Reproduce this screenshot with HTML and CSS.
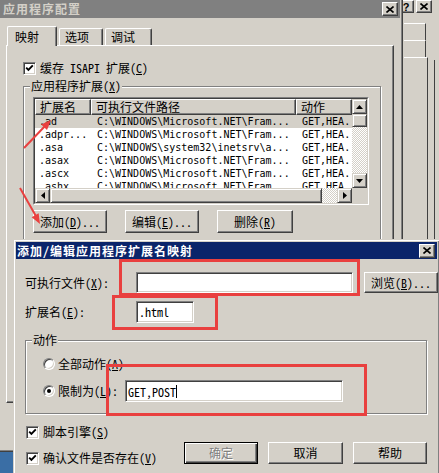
FILE: index.html
```html
<!DOCTYPE html>
<html lang="zh-CN">
<head>
  <meta charset="UTF-8" />
  <meta name="viewport" content="width=device-width, initial-scale=1.0" />
  <title>应用程序配置</title>
  <link rel="stylesheet" href="styles.css">
</head>
<body>
  <!-- window behind, on the right -->
  <div class="side">
    <div class="side-top">
      <span class="sbtn">?</span>
      <span class="sbtn"><svg width="8" height="7" viewBox="0 0 8 7"><path d="M0.5 0.5L7.5 6.5M7.5 0.5L0.5 6.5" stroke="#000" stroke-width="1.6"/></svg></span>
    </div>
    <div class="side-main">
      <div class="side-col">
        <div class="side-tab"></div>
        <div class="side-tab"></div>
        <div class="side-page"></div>
      </div>
      <div class="side-edge"></div>
    </div>
  </div>

  <!-- 应用程序配置 -->
  <div class="win win-main">
    <div class="title title-off">
      <span>应用程序配置</span>
      <span class="tbtn"><svg width="8" height="7" viewBox="0 0 8 7"><path d="M0.5 0.5L7.5 6.5M7.5 0.5L0.5 6.5" stroke="#000" stroke-width="1.6"/></svg></span>
    </div>
    <div class="tabs">
      <div class="tab tab-on">映射</div>
      <div class="tab tab-opt">选项</div>
      <div class="tab tab-dbg">调试</div>
    </div>
    <div class="panel">
      <div class="chk">
        <span class="box"><svg width="9" height="8" viewBox="0 0 9 8"><polyline points="1.2,3.6 3.4,5.8 7.8,1.4" fill="none" stroke="#000" stroke-width="1.9"/></svg></span>
        <span>缓存 ISAPI 扩展(<u>C</u>)</span>
      </div>
      <fieldset class="group group-ext">
        <legend>应用程序扩展(<u>X</u>)</legend>
        <div class="group-in">
          <div class="list">
            <div class="list-in">
              <div class="view">
                <div class="head"><span>扩展名</span><span>可执行文件路径</span><span>动作</span></div>
                <div class="row row-sel"><span>.ad</span><span>C:\WINDOWS\Microsoft.NET\Fram...</span><span>GET,HEA...</span></div>
                <div class="row"><span>.adpr...</span><span>C:\WINDOWS\Microsoft.NET\Fram...</span><span>GET,HEA...</span></div>
                <div class="row"><span>.asa</span><span>C:\WINDOWS\system32\inetsrv\a...</span><span>GET,HEA...</span></div>
                <div class="row"><span>.asax</span><span>C:\WINDOWS\Microsoft.NET\Fram...</span><span>GET,HEA...</span></div>
                <div class="row"><span>.ascx</span><span>C:\WINDOWS\Microsoft.NET\Fram...</span><span>GET,HEA...</span></div>
                <div class="row"><span>.ashx</span><span>C:\WINDOWS\Microsoft.NET\Fram...</span><span>GET,HEA...</span></div>
              </div>
              <div class="vscroll">
                <span class="sb-btn"><svg width="7" height="4" viewBox="0 0 7 4"><polygon points="3.5,0 7,4 0,4"/></svg></span>
                <span class="sb-thumb"></span>
                <span class="sb-track"></span>
                <span class="sb-btn"><svg width="7" height="4" viewBox="0 0 7 4"><polygon points="0,0 7,0 3.5,4"/></svg></span>
              </div>
              <div class="hscroll">
                <span class="sb-btn"><svg width="4" height="7" viewBox="0 0 4 7"><polygon points="4,0 4,7 0,3.5"/></svg></span>
                <span class="sb-thumb"></span>
                <span class="sb-track"></span>
                <span class="sb-btn"><svg width="4" height="7" viewBox="0 0 4 7"><polygon points="0,0 4,3.5 0,7"/></svg></span>
              </div>
              <div class="corner"></div>
            </div>
          </div>
          <div class="btnrow">
            <button class="btn">添加(<u>D</u>)...</button>
            <button class="btn">编辑(<u>E</u>)...</button>
            <button class="btn btn-del">删除(<u>R</u>)</button>
          </div>
        </div>
      </fieldset>
    </div>
  </div>

  <!-- 添加/编辑应用程序扩展名映射 -->
  <div class="win dlg">
    <div class="title title-on">
      <span>添加/编辑应用程序扩展名映射</span>
      <span class="tbtn"><svg width="8" height="7" viewBox="0 0 8 7"><path d="M0.5 0.5L7.5 6.5M7.5 0.5L0.5 6.5" stroke="#000" stroke-width="1.6"/></svg></span>
    </div>
    <div class="dlg-body">
      <div class="form">
        <span>可执行文件(<u>X</u>):</span>
        <div class="field"></div>
        <button class="btn">浏览(<u>B</u>)...</button>
        <span>扩展名(<u>E</u>):</span>
        <div class="field field-ext">.html</div>
      </div>
      <fieldset class="group group-verbs">
        <legend>动作</legend>
        <div class="group-in">
          <div class="opt opt-all"><span class="radio"></span><span>全部动作(<u>A</u>)</span></div>
          <div class="opt"><span class="radio radio-on"></span><span class="opt-lbl">限制为(<u>L</u>):</span><div class="field field-verbs"><span class="caret">GET,POST</span></div></div>
        </div>
      </fieldset>
      <div class="foot">
        <div class="checks">
          <div class="chk">
            <span class="box"><svg width="9" height="8" viewBox="0 0 9 8"><polyline points="1.2,3.6 3.4,5.8 7.8,1.4" fill="none" stroke="#000" stroke-width="1.9"/></svg></span>
            <span>脚本引擎(<u>S</u>)</span>
          </div>
          <div class="chk">
            <span class="box"><svg width="9" height="8" viewBox="0 0 9 8"><polyline points="1.2,3.6 3.4,5.8 7.8,1.4" fill="none" stroke="#000" stroke-width="1.9"/></svg></span>
            <span>确认文件是否存在(<u>V</u>)</span>
          </div>
        </div>
        <div class="actions">
          <button class="btn btn-def" disabled>确定</button>
          <button class="btn btn-cancel">取消</button>
          <button class="btn">帮助</button>
        </div>
      </div>
    </div>
  </div>

  <!-- annotations -->
  <div class="mark mark-exe"></div>
  <div class="mark mark-ext"></div>
  <div class="mark mark-verbs"></div>
  <svg class="arrows" width="439" height="473" viewBox="0 0 439 473">
    <line x1="24" y1="148" x2="46" y2="125" stroke="#e9403f" stroke-width="2"/>
    <polygon points="51,120 47,130 41.2,124.4" fill="#e9403f"/>
    <line x1="20" y1="188" x2="37" y2="218" stroke="#e9403f" stroke-width="2"/>
    <polygon points="40,224 38.65,213.3 31.65,217.2" fill="#e9403f"/>
  </svg>
</body>
</html>
```

FILE: styles.css
```css
* {
  box-sizing: border-box;
}
body {
  margin: 0;
  width: 439px;
  height: 473px;
  overflow: hidden;
  position: relative;
  background: #3a6ea5;
  font-family: "Noto Sans Mono CJK SC", "Noto Sans CJK SC", sans-serif;
  font-size: 12px;
  line-height: 14px;
  color: #000;
}
u {
  text-underline-offset: 1px;
}

/* windows */
.win {
  position: absolute;
  display: flex;
  flex-direction: column;
  padding: 2px;
  background: #d4d0c8;
  border: 1px solid;
  border-color: #d4d0c8 #404040 #404040 #d4d0c8;
  box-shadow: inset 1px 1px #fff, inset -1px -1px #808080;
}
.win-main {
  left: -3px;
  top: -3px;
  width: 406px;
  height: 455px;
}
.dlg {
  left: 13px;
  top: 239px;
  width: 427px;
  height: 240px;
}
.title {
  display: flex;
  align-items: center;
  justify-content: space-between;
  flex: none;
  height: 18px;
  padding: 0 2px 0 3px;
  font-weight: bold;
  letter-spacing: 1px;
}
.title-off {
  background: #808080;
  color: #d4d0c8;
}
.title-on {
  height: 17px;
  padding-left: 1px;
  background: #0a246a;
  color: #fff;
}
.tbtn {
  display: flex;
  align-items: center;
  justify-content: center;
  width: 16px;
  height: 14px;
  background: #d4d0c8;
  border: 1px solid;
  border-color: #fff #404040 #404040 #fff;
  box-shadow: inset -1px -1px #808080;
}

/* tabs */
.tabs {
  display: flex;
  align-items: flex-end;
  height: 27px;
  padding-left: 7px;
  flex: none;
}
.tab {
  height: 17px;
  padding: 1px 0 0 5px;
  border-top: 1px solid #fff;
  border-left: 1px solid #fff;
  border-right: 1px solid #404040;
  border-radius: 2px 2px 0 0;
  box-shadow: inset -1px 0 #808080;
}
.tab-on {
  position: relative;
  z-index: 1;
  width: 50px;
  height: 20px;
  margin-bottom: -1px;
  padding: 3px 0 0 7px;
  background: #d4d0c8;
}
.tab-opt {
  width: 44px;
  margin-left: 2px;
}
.tab-dbg {
  width: 47px;
  margin-left: 2px;
}
.panel {
  width: 388px;
  height: 358px;
  margin-left: 6px;
  padding: 15px 0 0 16px;
  border: 1px solid;
  border-color: #fff #404040 #404040 #fff;
  box-shadow: inset -1px -1px #808080;
}

/* check boxes, radios */
.chk {
  display: flex;
  align-items: center;
  gap: 4px;
  white-space: nowrap;
}
.box {
  display: flex;
  align-items: center;
  justify-content: center;
  flex: none;
  width: 13px;
  height: 13px;
  background: #fff;
  border: 1px solid;
  border-color: #808080 #fff #fff #808080;
  box-shadow: inset 1px 1px #404040, inset -1px -1px #d4d0c8;
}
.radio {
  display: flex;
  align-items: center;
  justify-content: center;
  flex: none;
  width: 12px;
  height: 12px;
  border-radius: 50%;
  background: #fff;
  border: 1px solid;
  border-color: #808080 #fff #fff #808080;
  box-shadow: inset 1px 1px #404040, inset -1px -1px #d4d0c8;
}
.radio-on::after {
  content: "";
  width: 4px;
  height: 4px;
  border-radius: 50%;
  background: #000;
}

/* group boxes */
.group {
  margin: 0;
  padding: 0;
  min-width: 0;
  border: 1px solid #808080;
  box-shadow: inset 1px 1px #fff, 1px 1px #fff;
}
.group legend {
  margin-left: 6px;
  padding: 0 1px;
  line-height: 14px;
  background: #d4d0c8;
}
.group-ext {
  width: 358px;
  margin-top: 4px;
}
.group-ext .group-in {
  padding: 4px 9px 8px;
}

/* list view */
.list {
  width: 336px;
  height: 108px;
  background: #fff;
  border: 1px solid;
  border-color: #808080 #fff #fff #808080;
}
.list-in {
  display: grid;
  grid-template-columns: 1fr 15px;
  grid-template-rows: 1fr 15px;
  height: 100%;
  border: 1px solid;
  border-color: #404040 #d4d0c8 #d4d0c8 #404040;
}
.view {
  overflow: hidden;
}
.head {
  display: grid;
  grid-template-columns: 56px 205px 1fr;
  height: 16px;
}
.head span {
  padding-left: 4px;
  line-height: 14px;
  white-space: nowrap;
  overflow: hidden;
  background: #d4d0c8;
  border: 1px solid;
  border-color: #fff #404040 #404040 #fff;
  box-shadow: inset -1px -1px #808080;
}
.row {
  display: grid;
  grid-template-columns: 56px 205px 1fr;
  height: 13px;
  font-family: "DejaVu Sans Mono", monospace;
  font-size: 10px;
  line-height: 13px;
  white-space: nowrap;
}
.row span {
  overflow: hidden;
  padding-left: 6px;
}
.row span:first-child {
  padding-left: 4px;
}
.row-sel {
  background: #d4d0c8;
}
.vscroll {
  display: flex;
  flex-direction: column;
}
.hscroll {
  display: flex;
}
.sb-btn,
.sb-thumb {
  display: flex;
  align-items: center;
  justify-content: center;
  flex: none;
  background: #d4d0c8;
  border: 1px solid;
  border-color: #d4d0c8 #404040 #404040 #d4d0c8;
  box-shadow: inset 1px 1px #fff, inset -1px -1px #808080;
}
.sb-btn {
  width: 15px;
  height: 15px;
}
.vscroll .sb-thumb {
  height: 13px;
}
.hscroll .sb-thumb {
  width: 272px;
}
.sb-track {
  flex: 1;
  background: repeating-conic-gradient(#fff 0 25%, #d4d0c8 0 50%) 0 0 / 2px 2px;
}
.corner {
  background: #d4d0c8;
}

/* buttons */
.btn {
  height: 23px;
  padding: 0;
  font: inherit;
  color: #000;
  white-space: nowrap;
  background: #d4d0c8;
  border: 1px solid;
  border-color: #fff #404040 #404040 #fff;
  box-shadow: inset -1px -1px #808080;
}
.btnrow {
  display: flex;
  gap: 18px;
  margin-top: 5px;
}
.btnrow .btn {
  width: 74px;
}
.btnrow .btn-del {
  width: 76px;
}

/* dialog */
.dlg-body {
  padding: 13px 10px 0 9px;
}
.form {
  display: grid;
  grid-template-columns: 100px 217px 74px;
  grid-template-rows: 21px 22px;
  column-gap: 11px;
  row-gap: 8px;
  align-items: center;
  white-space: nowrap;
}
.form .btn {
  height: 21px;
}
.field {
  display: flex;
  align-items: center;
  height: 100%;
  padding: 0 2px;
  background: #fff;
  border: 1px solid;
  border-color: #808080 #fff #fff #808080;
  box-shadow: inset 1px 1px #404040, inset -1px -1px #d4d0c8;
}
.field-ext {
  width: 58px;
}
.group-verbs {
  margin-top: 10px;
}
.group-verbs .group-in {
  display: flex;
  flex-direction: column;
  gap: 10px;
  padding: 10px 0 11px 17px;
}
.opt {
  display: flex;
  align-items: center;
  gap: 3px;
  white-space: nowrap;
}
.opt-all {
  height: 13px;
}
.opt-lbl {
  width: 64px;
}
.field-verbs {
  width: 218px;
  height: 22px;
}
.caret {
  line-height: 13px;
  border-right: 1px solid #000;
}
.foot {
  display: flex;
  justify-content: space-between;
  align-items: flex-end;
  margin-top: 11px;
}
.checks {
  display: flex;
  flex-direction: column;
  gap: 12px;
  margin-left: 1px;
}
.actions {
  display: flex;
  margin-bottom: 1px;
}
.actions .btn {
  width: 74px;
  height: 22px;
}
.actions .btn + .btn {
  margin-left: 10px;
}
.actions .btn-cancel {
  width: 75px;
  margin-left: 12px;
}
.btn-def {
  color: #808080;
  text-shadow: 1px 1px #fff;
  border-color: #000;
  box-shadow: inset 1px 1px #fff, inset -1px -1px #404040, inset -2px -2px #808080;
}

/* window at the right edge */
.side {
  position: absolute;
  left: 395px;
  top: 0;
  width: 50px;
  height: 250px;
  display: flex;
  flex-direction: column;
  background: #d4d0c8;
}
.side-top {
  display: flex;
  gap: 2px;
  height: 13px;
  padding-left: 3px;
}
.sbtn {
  display: flex;
  align-items: center;
  justify-content: center;
  width: 16px;
  height: 13px;
  font-family: "Liberation Sans", sans-serif;
  font-size: 11px;
  font-weight: bold;
  background: #d4d0c8;
  border: 1px solid;
  border-color: #fff #404040 #404040 #fff;
  box-shadow: inset -1px -1px #808080;
}
.side-main {
  display: flex;
  flex: 1;
  margin-top: 10px;
}
.side-col {
  display: flex;
  flex-direction: column;
  padding-left: 9px;
}
.side-tab {
  width: 22px;
  height: 17px;
  border-top: 1px solid #fff;
  border-right: 1px solid #404040;
}
.side-page {
  flex: 1;
  width: 24px;
  border-top: 1px solid #fff;
  border-right: 1px solid #404040;
}
.side-edge {
  width: 1px;
  margin: 37px 0 0 6px;
  background: #404040;
}

/* red annotations */
.mark {
  position: absolute;
  border: 3px solid #e9403f;
}
.mark-exe {
  left: 119px;
  top: 259px;
  width: 241px;
  height: 37px;
}
.mark-ext {
  left: 112px;
  top: 295px;
  width: 106px;
  height: 35px;
}
.mark-verbs {
  left: 106px;
  top: 364px;
  width: 261px;
  height: 52px;
}
.arrows {
  position: absolute;
  left: 0;
  top: 0;
}
```
